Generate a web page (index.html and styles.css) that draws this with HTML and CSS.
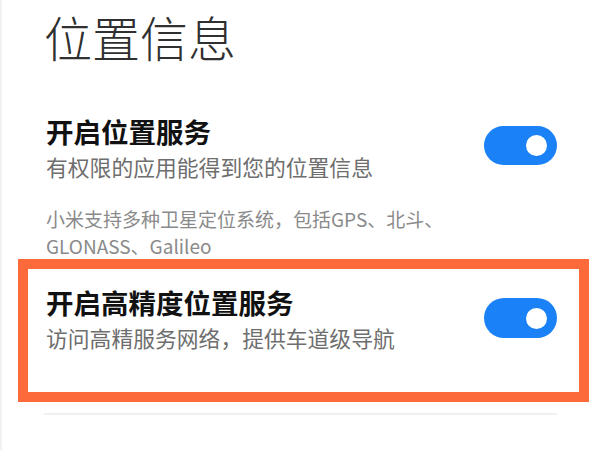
FILE: index.html
```html
<!DOCTYPE html>
<html lang="zh-CN">
<head>
<meta charset="utf-8">
<link rel="stylesheet" href="styles.css">
</head>
<body>
<div class="page">
  <h1 class="page-title">位置信息</h1>

  <div class="row row-first">
    <div class="row-text">
      <div class="row-title">开启位置服务</div>
      <div class="row-sub">有权限的应用能得到您的位置信息</div>
    </div>
    <div class="toggle on"><span class="knob"></span></div>
  </div>

  <div class="desc">
    <div>小米支持多种卫星定位系统，包括GPS、北斗、</div>
    <div>GLONASS、Galileo</div>
  </div>

  <div class="highlight">
    <div class="row row-boxed">
      <div class="row-text">
        <div class="row-title">开启高精度位置服务</div>
        <div class="row-sub">访问高精服务网络，提供车道级导航</div>
      </div>
      <div class="toggle on"><span class="knob"></span></div>
    </div>
  </div>

  <div class="divider"></div>
</div>
</body>
</html>
```

FILE: styles.css
```css
html, body {
  margin: 0;
  padding: 0;
  background: #ffffff;
}

body {
  width: 599px;
  height: 450px;
  overflow: hidden;
  font-family: "Noto Sans CJK SC", "Noto Sans", sans-serif;
}

.page {
  height: 450px;
  box-sizing: border-box;
  border-left: 2px solid #f1f1f1;
  display: flex;
  flex-direction: column;
}

.page-title {
  flex: none;
  margin: 12px 0 0 42px;
  font-size: 48px;
  line-height: 48px;
  font-weight: 300;
  color: #303030;
}

.row {
  display: flex;
  align-items: center;
  justify-content: space-between;
}

.row-first {
  flex: none;
  margin-top: 51px;
  padding: 0 42px 0 44px;
}

.row-text {
  display: flex;
  flex-direction: column;
}

.row-title {
  font-size: 27.5px;
  line-height: 40px;
  font-weight: 700;
  color: #111111;
}

.row-sub {
  font-size: 21.8px;
  line-height: 32px;
  color: #6e6e6e;
}

.toggle {
  flex: none;
  width: 73px;
  height: 39px;
  border-radius: 20px;
  background: #1a82f6;
  display: flex;
  align-items: center;
  justify-content: flex-end;
  padding-right: 10px;
  box-sizing: border-box;
  margin-bottom: 3px;
}

.knob {
  width: 21px;
  height: 21px;
  border-radius: 50%;
  background: #ffffff;
}

.desc {
  flex: none;
  margin-top: 21.5px;
  padding-left: 44px;
  font-size: 19px;
  line-height: 27px;
  color: #8a8a8a;
}

.desc div {
  height: 27px;
}

.highlight {
  flex: none;
  margin: 0 10px 0 16px;
  border: 10px solid #fc6a3b;
  height: 143px;
  box-sizing: border-box;
}

.row-boxed {
  padding: 13.5px 22px 0 18px;
}

.row-boxed .toggle {
  margin-bottom: 0;
  height: 40px;
}

.divider {
  flex: none;
  margin: 11px 42px 0 42px;
  height: 2px;
  background: #edf1f0;
}
```
